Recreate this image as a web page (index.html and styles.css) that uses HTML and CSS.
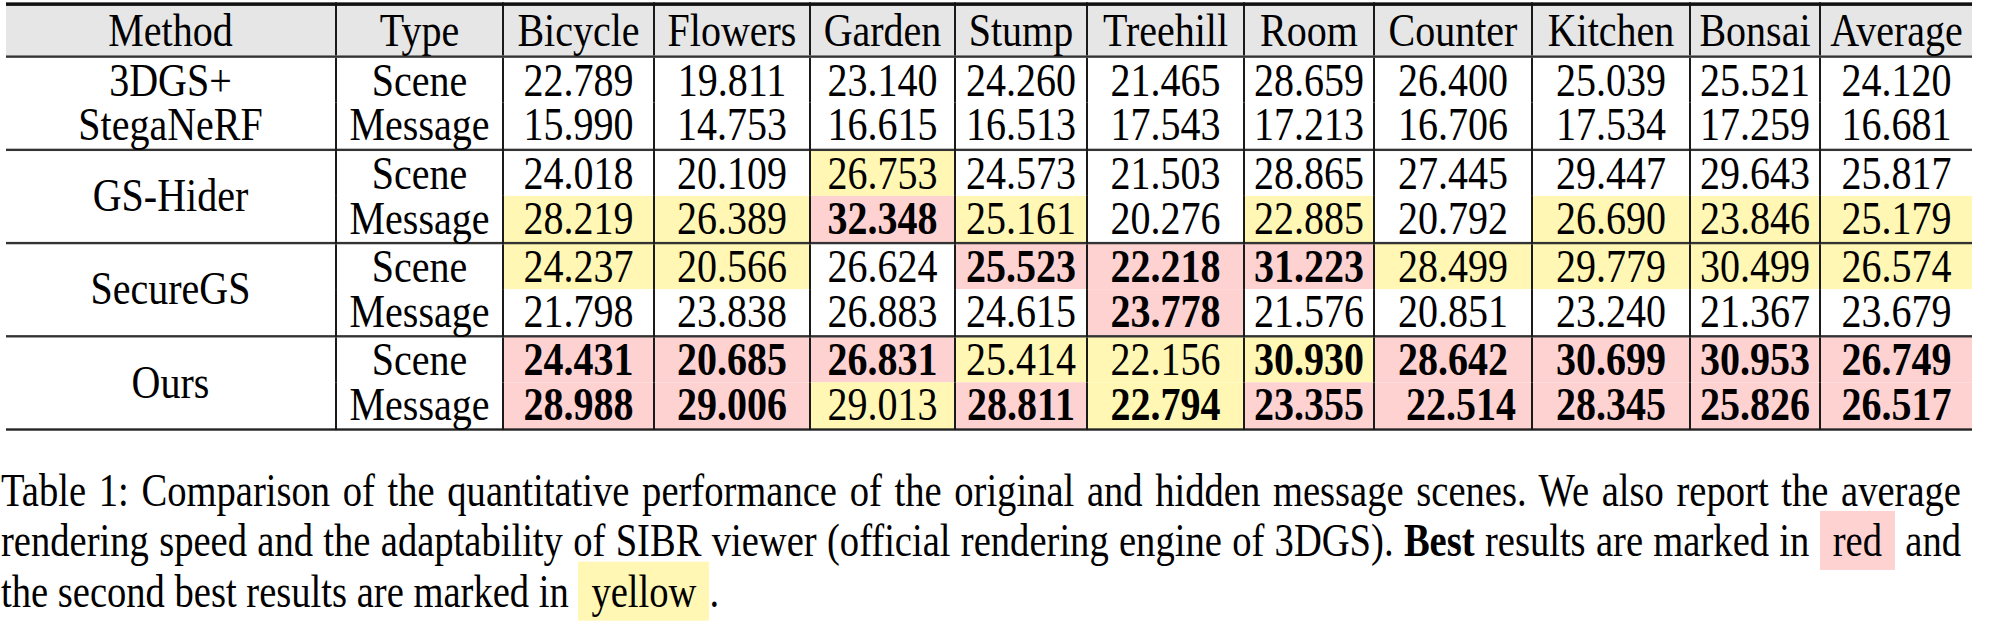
FILE: index.html
```html
<!DOCTYPE html>
<html>
<head>
<meta charset="utf-8">
<link rel="stylesheet" href="styles.css">
</head>
<body>
<div class="page">
<table class="res">
<colgroup>
<col class="c-method"><col class="c-type"><col class="c-bicycle"><col class="c-flowers"><col class="c-garden"><col class="c-stump"><col class="c-treehill"><col class="c-room"><col class="c-counter"><col class="c-kitchen"><col class="c-bonsai"><col class="c-average">
</colgroup>
<thead>
<tr class="head">
<th>Method</th><th class="vl">Type</th><th class="vl">Bicycle</th><th class="vl">Flowers</th><th class="vl">Garden</th><th class="vl">Stump</th><th class="vl">Treehill</th><th class="vl">Room</th><th class="vl">Counter</th><th class="vl">Kitchen</th><th class="vl">Bonsai</th><th class="vl">Average</th>
</tr>
</thead>
<tbody class="sec">
<tr class="r1">
<td rowspan="2" class="method two">3DGS+<br>StegaNeRF</td><td class="vl">Scene</td><td class="vl">22.789</td><td class="vl">19.811</td><td class="vl">23.140</td><td class="vl">24.260</td><td class="vl">21.465</td><td class="vl">28.659</td><td class="vl">26.400</td><td class="vl">25.039</td><td class="vl">25.521</td><td class="vl">24.120</td>
</tr>
<tr class="r2">
<td class="vl">Message</td><td class="vl">15.990</td><td class="vl">14.753</td><td class="vl">16.615</td><td class="vl">16.513</td><td class="vl">17.543</td><td class="vl">17.213</td><td class="vl">16.706</td><td class="vl">17.534</td><td class="vl">17.259</td><td class="vl">16.681</td>
</tr>
</tbody>
<tbody class="sec">
<tr class="r1">
<td rowspan="2" class="method">GS-Hider</td><td class="vl">Scene</td><td class="vl">24.018</td><td class="vl">20.109</td><td class="vl y">26.753</td><td class="vl">24.573</td><td class="vl">21.503</td><td class="vl">28.865</td><td class="vl">27.445</td><td class="vl">29.447</td><td class="vl">29.643</td><td class="vl">25.817</td>
</tr>
<tr class="r2">
<td class="vl">Message</td><td class="vl y">28.219</td><td class="vl y">26.389</td><td class="vl r">32.348</td><td class="vl y">25.161</td><td class="vl">20.276</td><td class="vl y">22.885</td><td class="vl">20.792</td><td class="vl y">26.690</td><td class="vl y">23.846</td><td class="vl y">25.179</td>
</tr>
</tbody>
<tbody class="sec">
<tr class="r1">
<td rowspan="2" class="method">SecureGS</td><td class="vl">Scene</td><td class="vl y">24.237</td><td class="vl y">20.566</td><td class="vl">26.624</td><td class="vl r">25.523</td><td class="vl r">22.218</td><td class="vl r">31.223</td><td class="vl y">28.499</td><td class="vl y">29.779</td><td class="vl y">30.499</td><td class="vl y">26.574</td>
</tr>
<tr class="r2">
<td class="vl">Message</td><td class="vl">21.798</td><td class="vl">23.838</td><td class="vl">26.883</td><td class="vl">24.615</td><td class="vl r">23.778</td><td class="vl">21.576</td><td class="vl">20.851</td><td class="vl">23.240</td><td class="vl">21.367</td><td class="vl">23.679</td>
</tr>
</tbody>
<tbody class="sec last">
<tr class="r1">
<td rowspan="2" class="method">Ours</td><td class="vl">Scene</td><td class="vl r">24.431</td><td class="vl r">20.685</td><td class="vl r">26.831</td><td class="vl y">25.414</td><td class="vl y">22.156</td><td class="vl y b">30.930</td><td class="vl r">28.642</td><td class="vl r">30.699</td><td class="vl r">30.953</td><td class="vl r">26.749</td>
</tr>
<tr class="r2">
<td class="vl">Message</td><td class="vl r">28.988</td><td class="vl r">29.006</td><td class="vl y">29.013</td><td class="vl r">28.811</td><td class="vl y b">22.794</td><td class="vl r">23.355</td><td class="vl r"><span class="nudge">22.514</span></td><td class="vl r">28.345</td><td class="vl r">25.826</td><td class="vl r">26.517</td>
</tr>
</tbody>
</table>
<p class="caption">Table 1: Comparison of the quantitative performance of the original and hidden message scenes. We also report the average rendering speed and the adaptability of SIBR viewer (official rendering engine of 3DGS). <b>Best</b> results are marked in <span class="box red">red</span> and the second best results are marked in <span class="box yellow">yellow</span>.</p>
</div>
</body>
</html>
```

FILE: styles.css
```css
html, body {
  margin: 0;
  padding: 0;
  background: #ffffff;
}

body {
  min-height: 633px;
}

/* The reference glyphs are vertically stretched (~1.18x) relative to
   regular Times; vertical sizes below are given pre-stretch. */
.page {
  padding: 1.7px 0 0 0;
  min-height: 520px;
  font-family: "Liberation Serif", "Times New Roman", serif;
  color: #000;
  transform: scaleY(1.18);
  transform-origin: 0 0;
}

.res {
  margin-left: 6px;
  border-collapse: collapse;
  table-layout: fixed;
  width: 1966px;
  font-size: 40px;
  border-top: 3px solid #111;
  border-bottom: 2px solid #222;
}

.c-method { width: 330px; }
.c-type { width: 167px; }
.c-bicycle { width: 151px; }
.c-flowers { width: 156px; }
.c-garden { width: 145px; }
.c-stump { width: 132px; }
.c-treehill { width: 157px; }
.c-room { width: 130px; }
.c-counter { width: 158px; }
.c-kitchen { width: 158px; }
.c-bonsai { width: 130px; }
.c-average { width: 152px; }

.res th,
.res td {
  padding: 0;
  text-align: center;
  white-space: nowrap;
  font-weight: normal;
  line-height: 38.5px;
  height: 38.5px;
}

.res .head th {
  background: #e6e6e6;
  height: 42px;
  line-height: 42px;
  border-bottom: 2px solid #333;
}

.res .vl {
  border-left: 2px solid #1a1a1a;
}

.res .sec {
  border-bottom: 2px solid #333;
}

.res .sec.last {
  border-bottom: 2px solid #222;
}

.res .method {
  vertical-align: middle;
}

.res .y {
  background: #fff7b3;
}

.res .r {
  background: #ffd2d2;
  font-weight: bold;
}

.res .b {
  font-weight: bold;
}

.nudge {
  position: relative;
  left: 8px;
}

.caption {
  margin: 30px 0 0 0;
  width: 1960px;
  padding-left: 1px;
  font-size: 38.6px;
  line-height: 42.8px;
  text-align: justify;
}

.box {
  padding: 4px 13px;
}

.box.red {
  background: #ffd2d2;
}

.box.yellow {
  background: #fff7b3;
}
```
